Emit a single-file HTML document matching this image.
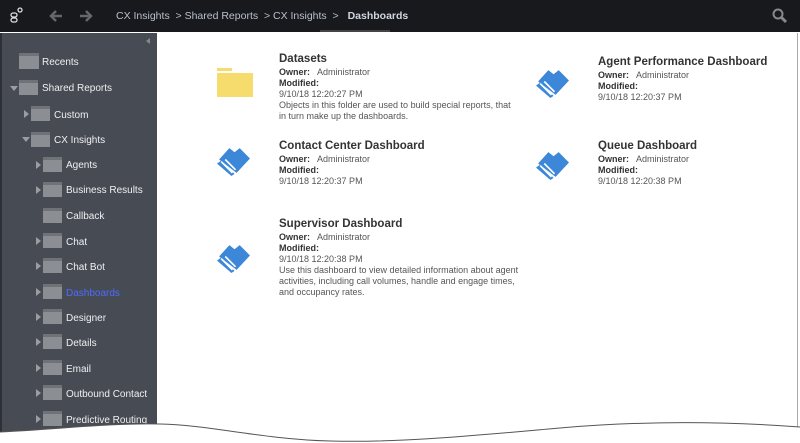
<!DOCTYPE html>
<html><head><meta charset="utf-8"><style>
*{margin:0;padding:0;box-sizing:border-box}
body{width:800px;height:443px;overflow:hidden;background:#fff;font-family:"Liberation Sans",sans-serif;position:relative}
.hdr{position:absolute;left:0;top:0;width:800px;height:32px;background:#17191c}
.crumb{position:absolute;top:10px;left:116px;font-size:10.5px;color:#b8c0cc;white-space:nowrap}
.crumb b{color:#cfd6e0;margin-left:6px}
.ul{position:absolute;left:320px;top:30px;width:70px;height:2px;background:#444}
.side{position:absolute;left:0;top:33px;width:157px;height:410px;background:#474b53;border-left:2px solid #2d3036}
.it{position:absolute;font-size:10px;color:#eef0f2;white-space:nowrap}
.it.sel{color:#4f6bff}
.ico{position:absolute;width:19px;height:15px;background:#8b8e93;border-top:3px solid #6f7276}
.tri{position:absolute;width:0;height:0;border-top:4px solid transparent;border-bottom:4px solid transparent;border-left:5px solid #9a9da2}
.tri.d{border-left:4px solid transparent;border-right:4px solid transparent;border-top:5px solid #9a9da2;border-bottom:0}
.card{position:absolute;font-size:9px;color:#555;line-height:11px}
.card h3{font-size:11.5px;color:#333;font-weight:bold;line-height:14px;margin-bottom:1px}
.card b{color:#333}
.rb{position:absolute;right:2px;top:33px;width:1px;height:410px;background:#aaa}
</style></head><body>
<div class="hdr">
<svg style="position:absolute;left:8px;top:7px" width="16" height="18" viewBox="0 0 16 18"><circle cx="12" cy="3" r="2" fill="none" stroke="#ddd" stroke-width="1.3"/><rect x="3" y="6" width="6" height="4" rx="2" fill="none" stroke="#ddd" stroke-width="1.3"/><rect x="3" y="11" width="6" height="4" rx="2" fill="none" stroke="#ddd" stroke-width="1.3"/></svg>
<svg style="position:absolute;left:49px;top:9px" width="14" height="14" viewBox="0 0 14 14"><path d="M13 7H2M7 2L2 7l5 5" stroke="#666" stroke-width="2.5" fill="none"/></svg>
<svg style="position:absolute;left:79px;top:9px" width="14" height="14" viewBox="0 0 14 14"><path d="M1 7h11M7 2l5 5-5 5" stroke="#666" stroke-width="2.5" fill="none"/></svg>
<div class="crumb">CX Insights &nbsp;&gt; Shared Reports &nbsp;&gt; CX Insights &nbsp;&gt; <b>Dashboards</b></div>
<div class="ul"></div>
<svg style="position:absolute;left:772px;top:8px" width="16" height="16" viewBox="0 0 16 16"><circle cx="6" cy="6" r="4.5" stroke="#888" stroke-width="2" fill="none"/><path d="M9 9l5 5" stroke="#888" stroke-width="3"/></svg>
</div>
<div class="side">
<div style="position:absolute;left:144px;top:5px;width:0;height:0;border-top:3px solid transparent;border-bottom:3px solid transparent;border-right:4px solid #888"></div>
<div class="ico" style="left:17px;top:20px;width:20px;height:16px"></div><div class="it" style="left:40px;top:24px">Recents</div>
<div class="tri d" style="left:8px;top:53px"></div><div class="ico" style="left:17px;top:47px"></div><div class="it" style="left:40px;top:50px">Shared Reports</div>
<div class="tri" style="left:22px;top:77px"></div><div class="ico" style="left:29px;top:73px"></div><div class="it" style="left:52px;top:77px">Custom</div>
<div class="tri d" style="left:20px;top:104px"></div><div class="ico" style="left:29px;top:99px"></div><div class="it" style="left:52px;top:102px">CX Insights</div>
<div class="tri" style="left:34px;top:128px"></div><div class="ico" style="left:41px;top:124px"></div><div class="it" style="left:64px;top:127px">Agents</div>
<div class="tri" style="left:34px;top:153px"></div><div class="ico" style="left:41px;top:149px"></div><div class="it" style="left:64px;top:152px">Business Results</div>
<div class="ico" style="left:41px;top:175px"></div><div class="it" style="left:64px;top:178px">Callback</div>
<div class="tri" style="left:34px;top:204px"></div><div class="ico" style="left:41px;top:200px"></div><div class="it" style="left:64px;top:204px">Chat</div>
<div class="tri" style="left:34px;top:229px"></div><div class="ico" style="left:41px;top:225px"></div><div class="it" style="left:64px;top:229px">Chat Bot</div>
<div class="tri" style="left:34px;top:255px"></div><div class="ico" style="left:41px;top:251px"></div><div class="it sel" style="left:64px;top:255px">Dashboards</div>
<div class="tri" style="left:34px;top:280px"></div><div class="ico" style="left:41px;top:276px"></div><div class="it" style="left:64px;top:280px">Designer</div>
<div class="tri" style="left:34px;top:305px"></div><div class="ico" style="left:41px;top:301px"></div><div class="it" style="left:64px;top:305px">Details</div>
<div class="tri" style="left:34px;top:331px"></div><div class="ico" style="left:41px;top:327px"></div><div class="it" style="left:64px;top:331px">Email</div>
<div class="tri" style="left:34px;top:356px"></div><div class="ico" style="left:41px;top:352px"></div><div class="it" style="left:64px;top:356px">Outbound Contact</div>
<div class="tri" style="left:34px;top:382px"></div><div class="ico" style="left:41px;top:378px"></div><div class="it" style="left:64px;top:382px">Predictive Routing</div>
</div>
<div class="rb"></div>
<svg width="0" height="0" style="position:absolute"><defs><g id="db"><path d="M3 16L13 5l5 4 5-4 10 10-13 14z" fill="#3d87d8"/><path d="M1 20l4-3 13 13-3 2z" fill="#3d87d8"/><path d="M5 18l11 11M9 16l10 10" stroke="#fff" stroke-width="1.6" fill="none"/></g></defs></svg>
<div style="position:absolute;left:217px;top:68px;width:15px;height:3px;background:#f5dc6c"></div>
<div style="position:absolute;left:217px;top:73px;width:36px;height:24px;background:#f5dc6c"></div>
<svg style="position:absolute;left:216px;top:143px" width="35" height="34" viewBox="0 0 34 33"><use href="#db"/></svg>
<svg style="position:absolute;left:216px;top:240px" width="35" height="34" viewBox="0 0 34 33"><use href="#db"/></svg>
<svg style="position:absolute;left:535px;top:65px" width="35" height="34" viewBox="0 0 34 33"><use href="#db"/></svg>
<svg style="position:absolute;left:535px;top:147px" width="35" height="34" viewBox="0 0 34 33"><use href="#db"/></svg>
<div class="card" style="left:279px;top:52px"><h3>Datasets</h3><b>Owner:</b>&nbsp;&nbsp; Administrator<br><b>Modified:</b><br>9/10/18 12:20:27 PM<br>Objects in this folder are used to build special reports, that<br>in turn make up the dashboards.</div>
<div class="card" style="left:279px;top:139px"><h3>Contact Center Dashboard</h3><b>Owner:</b>&nbsp;&nbsp; Administrator<br><b>Modified:</b><br>9/10/18 12:20:37 PM</div>
<div class="card" style="left:279px;top:217px"><h3>Supervisor Dashboard</h3><b>Owner:</b>&nbsp;&nbsp; Administrator<br><b>Modified:</b><br>9/10/18 12:20:38 PM<br>Use this dashboard to view detailed information about agent<br>activities, including call volumes, handle and engage times,<br>and occupancy rates.</div>
<div class="card" style="left:598px;top:55px"><h3>Agent Performance Dashboard</h3><b>Owner:</b>&nbsp;&nbsp; Administrator<br><b>Modified:</b><br>9/10/18 12:20:37 PM</div>
<div class="card" style="left:598px;top:139px"><h3>Queue Dashboard</h3><b>Owner:</b>&nbsp;&nbsp; Administrator<br><b>Modified:</b><br>9/10/18 12:20:38 PM</div>
<svg style="position:absolute;left:0;top:415px" width="800" height="28"><path d="M0 17C60 14 110 8 160 9S260 24 330 26S480 20 560 13S720 6 800 12V28H0z" fill="#fff"/><path d="M0 17C60 14 110 8 160 9S260 24 330 26S480 20 560 13S720 6 800 12" stroke="#555" stroke-width="1" fill="none"/></svg>
</body></html>
